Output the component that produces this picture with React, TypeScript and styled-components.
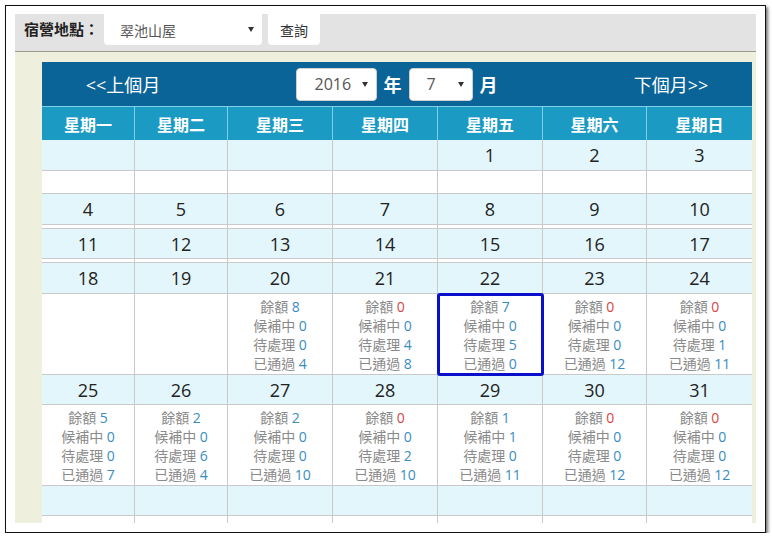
import * as React from "react";
import styled, { createGlobalStyle } from "styled-components";

const GlobalStyle = createGlobalStyle`
  *, *::before, *::after { box-sizing: border-box; }
  html, body { margin: 0; padding: 0; background: #fff; }
  body { font-family: "Open Sans", "Noto Sans CJK TC", sans-serif; }
`;

const Frame = styled.div`
  width: 761px;
  height: 528px;
  margin: 5px 0 0 5px;
  padding: 8px 9px 9px 9px;
  border: 1px solid #111;
  background: #fff;
  box-shadow: 2px 2px 3px rgba(0, 0, 0, 0.55);
  display: flex;
  flex-direction: column;
`;

const Toolbar = styled.div`
  flex: none;
  height: 38px;
  display: flex;
  align-items: flex-start;
  padding-left: 9px;
  background: #e3e3e3;
  border-bottom: 1px solid #9a9a8c;
`;

const FieldLabel = styled.span`
  height: 31px;
  line-height: 31px;
  margin-right: 5px;
  font-size: 15px;
  font-weight: bold;
  color: #222;
`;

const SelectBox = styled.div<{ $w: number; $pl: number; $h: number; $round?: boolean }>`
  width: ${(p) => p.$w}px;
  height: ${(p) => p.$h}px;
  padding-left: ${(p) => p.$pl}px;
  padding-right: 8px;
  display: flex;
  align-items: center;
  background: #fff;
  border-radius: ${(p) => (p.$round ? "4px" : "0 0 4px 4px")};
  border: ${(p) => (p.$round ? "1px solid #d0d0d0" : "none")};
  font-size: ${(p) => (p.$round ? 16 : 14)}px;
  color: #555;
`;

const Caret = styled.span`
  margin-left: auto;
  width: 0;
  height: 0;
  border-left: 3px solid transparent;
  border-right: 3px solid transparent;
  border-top: 5px solid #333;
`;

const QueryButton = styled.button`
  width: 52px;
  height: 31px;
  margin-left: 6px;
  padding: 0;
  border: none;
  border-radius: 0 0 4px 4px;
  background: #fff;
  font-family: inherit;
  font-size: 14px;
  color: #333;
`;

const Panel = styled.div`
  flex: 1;
  overflow: hidden;
  padding: 10px 4px 0 27px;
  background: #eef0dd;
`;

const Calendar = styled.div`
  width: 710px;
`;

const NavBar = styled.div`
  height: 44px;
  display: grid;
  grid-template-columns: 162px 1fr 162px;
  align-items: center;
  background: #0b6497;
`;

const NavLink = styled.a`
  text-align: center;
  color: #fff;
  font-size: 18px;
  text-decoration: none;
`;

const NavMiddle = styled.div`
  display: flex;
  align-items: center;
  justify-content: center;
  gap: 6px;
`;

const Unit = styled.span`
  color: #fff;
  font-size: 18px;
  font-weight: bold;
  padding: 0 1px;
`;

const Grid = styled.div`
  display: grid;
  grid-template-columns: 93px 93px 105px 105px 105px 104px 105px;
`;

const HeadCell = styled.div<{ $last?: boolean }>`
  height: 34px;
  display: flex;
  align-items: center;
  justify-content: center;
  background: #1b9bc4;
  border-top: 1px solid #7fd0e6;
  border-right: ${(p) => (p.$last ? "none" : "1px solid #7fd0e6")};
  color: #fff;
  font-size: 16px;
  font-weight: bold;
`;

const DateCell = styled.div<{ $h: number; $last?: boolean }>`
  height: ${(p) => p.$h}px;
  display: flex;
  align-items: center;
  justify-content: center;
  background: #e2f6fc;
  border-bottom: 1px solid #c9c9c9;
  border-right: ${(p) => (p.$last ? "none" : "1px solid #c9c9c9")};
  font-size: 18px;
  color: #222;
`;

const InfoCell = styled.div<{ $h: number; $last?: boolean; $active?: boolean }>`
  position: relative;
  height: ${(p) => p.$h}px;
  padding-top: 3px;
  background: #fff;
  border-bottom: 1px solid #c9c9c9;
  border-right: ${(p) => (p.$last ? "none" : "1px solid #c9c9c9")};
  text-align: center;
  font-size: 14px;
  line-height: 19px;
  ${(p) =>
    p.$active &&
    `
    z-index: 1;
    outline: 3px solid #0a0fcc;
    outline-offset: -2px;
    border-radius: 2px;
  `}
`;

const InfoLine = styled.div`
  color: #8a8a8a;
  white-space: nowrap;
`;

const InfoNum = styled.span<{ $alert?: boolean }>`
  color: ${(p) => (p.$alert ? "#d9463f" : "#3a8cbf")};
`;

const weekdays = ["星期一", "星期二", "星期三", "星期四", "星期五", "星期六", "星期日"];
const labels = ["餘額", "候補中", "待處理", "已通過"];

const info: Record<number, number[]> = {
  20: [8, 0, 0, 4],
  21: [0, 0, 4, 8],
  22: [7, 0, 5, 0],
  23: [0, 0, 0, 12],
  24: [0, 0, 1, 11],
  25: [5, 0, 0, 7],
  26: [2, 0, 6, 4],
  27: [2, 0, 0, 10],
  28: [0, 0, 2, 10],
  29: [1, 1, 0, 11],
  30: [0, 0, 0, 12],
  31: [0, 0, 0, 12],
};

const weeks: { days: (number | null)[]; dateH: number; infoH: number }[] = [
  { days: [null, null, null, null, 1, 2, 3], dateH: 31, infoH: 23 },
  { days: [4, 5, 6, 7, 8, 9, 10], dateH: 31, infoH: 4 },
  { days: [11, 12, 13, 14, 15, 16, 17], dateH: 30, infoH: 4 },
  { days: [18, 19, 20, 21, 22, 23, 24], dateH: 31, infoH: 81 },
  { days: [25, 26, 27, 28, 29, 30, 31], dateH: 30, infoH: 81 },
  { days: [null, null, null, null, null, null, null], dateH: 30, infoH: 21 },
];

const DayInfo = ({ values }: { values: number[] }) => (
  <>
    {labels.map((l, i) => (
      <InfoLine key={l}>
        {l} <InfoNum $alert={i === 0 && values[i] === 0}>{values[i]}</InfoNum>
      </InfoLine>
    ))}
  </>
);

export default function App() {
  return (
    <>
      <GlobalStyle />
      <Frame>
        <Toolbar>
          <FieldLabel>宿營地點：</FieldLabel>
          <SelectBox $w={158} $h={31} $pl={16}>
            翠池山屋
            <Caret />
          </SelectBox>
          <QueryButton>查詢</QueryButton>
        </Toolbar>
        <Panel>
          <Calendar>
            <NavBar>
              <NavLink>&lt;&lt;上個月</NavLink>
              <NavMiddle>
                <SelectBox $w={81} $h={33} $pl={18} $round>
                  2016
                  <Caret />
                </SelectBox>
                <Unit>年</Unit>
                <SelectBox $w={64} $h={33} $pl={17} $round>
                  7
                  <Caret />
                </SelectBox>
                <Unit>月</Unit>
              </NavMiddle>
              <NavLink>下個月&gt;&gt;</NavLink>
            </NavBar>
            <Grid>
              {weekdays.map((d, i) => (
                <HeadCell key={d} $last={i === 6}>
                  {d}
                </HeadCell>
              ))}
              {weeks.map((w, wi) => (
                <React.Fragment key={wi}>
                  {w.days.map((d, i) => (
                    <DateCell key={`d${i}`} $h={w.dateH} $last={i === 6}>
                      {d ?? ""}
                    </DateCell>
                  ))}
                  {w.days.map((d, i) => (
                    <InfoCell key={`i${i}`} $h={w.infoH} $last={i === 6} $active={d === 22}>
                      {d !== null && info[d] ? <DayInfo values={info[d]} /> : null}
                    </InfoCell>
                  ))}
                </React.Fragment>
              ))}
            </Grid>
          </Calendar>
        </Panel>
      </Frame>
    </>
  );
}
